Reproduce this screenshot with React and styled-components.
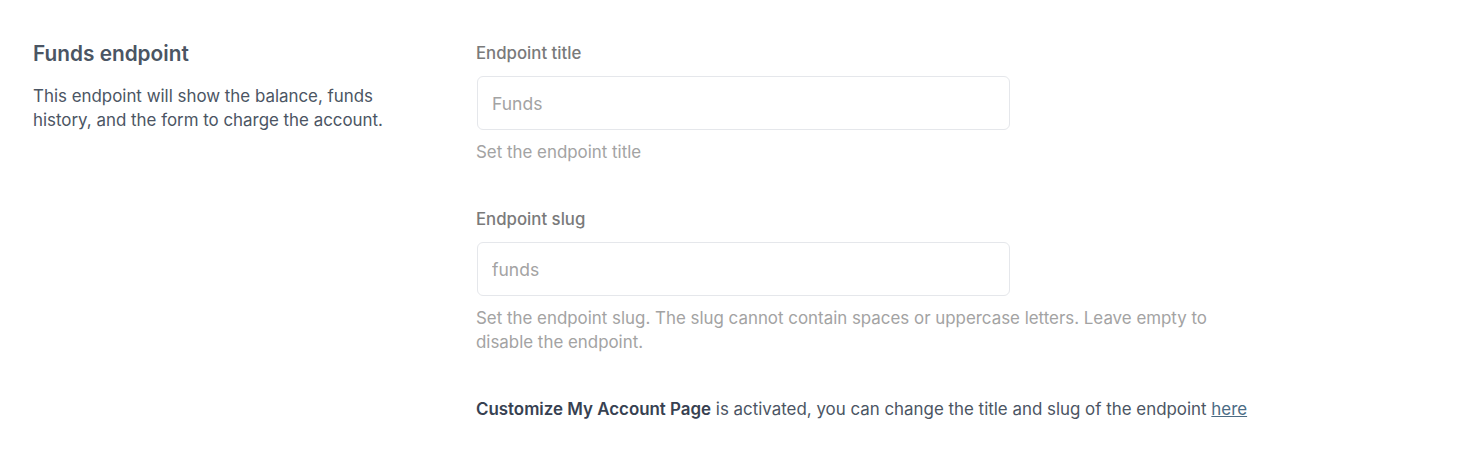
import React from 'react';
import styled, { createGlobalStyle } from 'styled-components';

const GlobalStyle = createGlobalStyle`
  body {
    margin: 0;
    background: #ffffff;
    font-family: Inter, "Noto Sans", sans-serif;
    -webkit-font-smoothing: antialiased;
  }
`;

const Section = styled.section`
  display: grid;
  grid-template-columns: 443px 1fr;
  padding: 40px 33px 20px;
`;

const Intro = styled.div`
  max-width: 370px;
`;

const Heading = styled.h3`
  margin: 0;
  font-size: 20.8px;
  line-height: 28px;
  font-weight: 600;
  color: #4b5563;
`;

const Description = styled.p`
  margin: 16px 0 0;
  font-size: 16.9px;
  line-height: 24px;
  color: #4b5563;
`;

const Fields = styled.div`
  display: flex;
  flex-direction: column;
  gap: 42px;
`;

const Field = styled.div`
  display: flex;
  flex-direction: column;
`;

const Label = styled.label`
  font-size: 16.8px;
  line-height: 24px;
  font-weight: 500;
  color: #7a7a7a;
  margin-top: 1px;
  margin-bottom: 11px;
`;

const Input = styled.input`
  box-sizing: border-box;
  width: 533px;
  height: 54px;
  margin-left: 1px;
  padding: 0 14px;
  border: 1px solid #e5e7eb;
  border-radius: 6px;
  font-family: inherit;
  font-size: 17.5px;
  color: #374151;
  outline: none;
  &::placeholder {
    color: #a3a3a3;
  }
`;

const Help = styled.p`
  max-width: 760px;
  margin: 10px 0 0;
  font-size: 16.9px;
  line-height: 24px;
  color: #a3a3a3;
`;

const Notice = styled.p`
  margin: 1px 0 0;
  font-size: 16.9px;
  line-height: 24px;
  color: #4b5563;
  strong {
    font-weight: 600;
    color: #374151;
  }
  a {
    color: #4b6b84;
    text-decoration: underline;
  }
`;

export default function App() {
  return (
    <>
      <GlobalStyle />
      <Section>
        <Intro>
          <Heading>Funds endpoint</Heading>
          <Description>
            This endpoint will show the balance, funds history, and the form to charge the account.
          </Description>
        </Intro>
        <Fields>
          <Field>
            <Label>Endpoint title</Label>
            <Input placeholder="Funds" />
            <Help>Set the endpoint title</Help>
          </Field>
          <Field>
            <Label>Endpoint slug</Label>
            <Input placeholder="funds" />
            <Help>
              Set the endpoint slug. The slug cannot contain spaces or uppercase letters. Leave empty to disable the endpoint.
            </Help>
          </Field>
          <Notice>
            <strong>Customize My Account Page</strong> is activated, you can change the title and slug of the endpoint <a href="#">here</a>
          </Notice>
        </Fields>
      </Section>
    </>
  );
}
